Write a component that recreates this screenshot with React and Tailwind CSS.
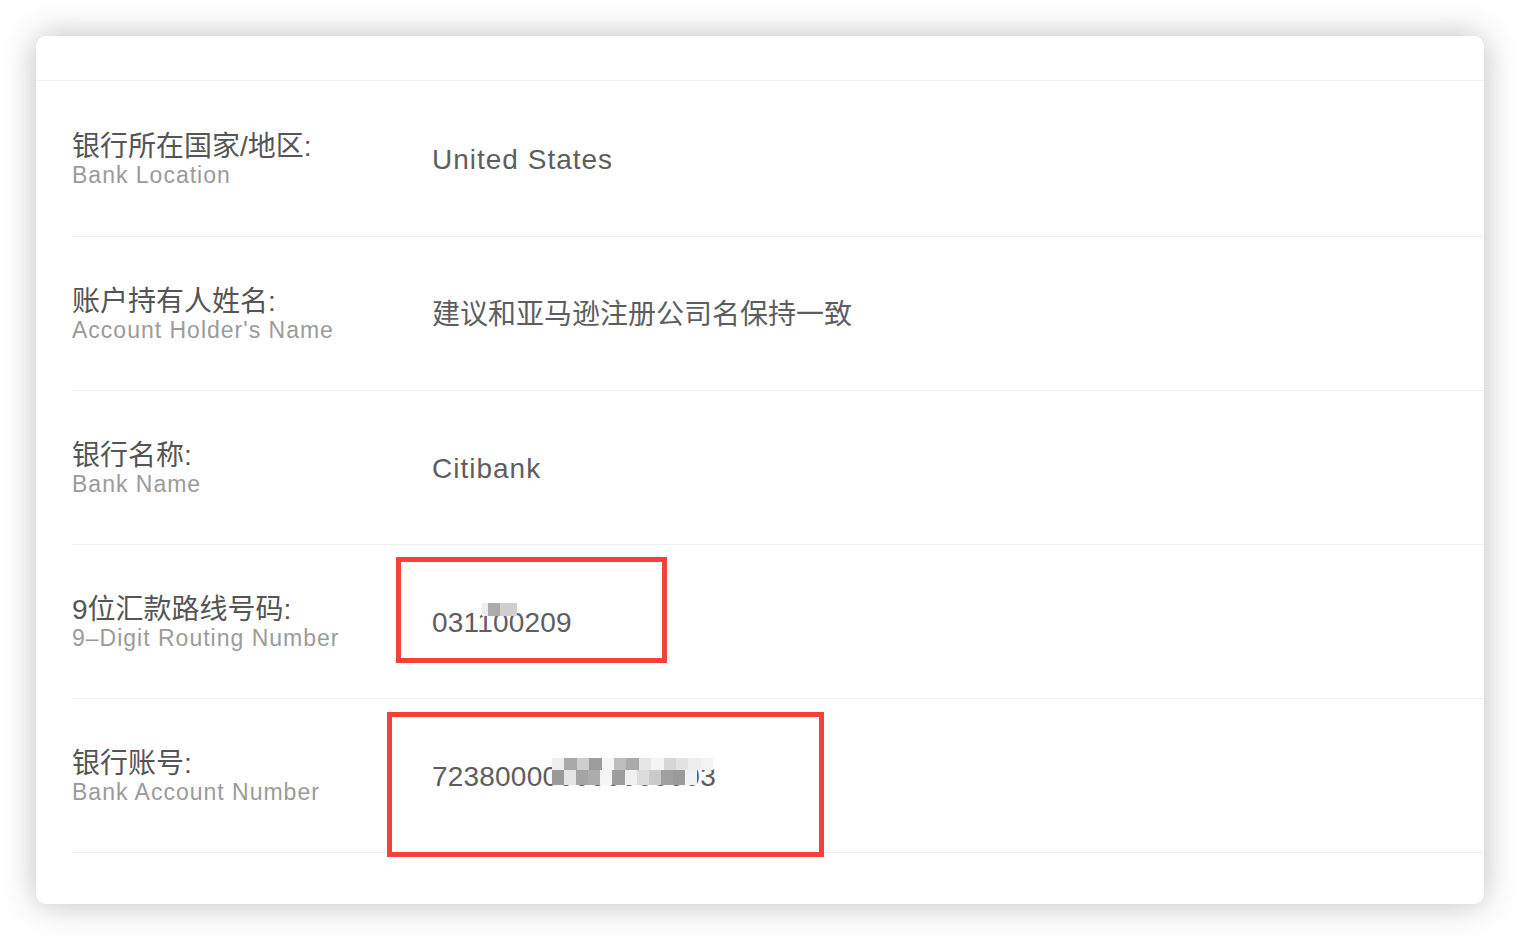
import React from 'react';

const rows = [
    { zh: '银行所在国家/地区:', en: 'Bank Location', value: 'United States', valueClass: 'tracking-[1px]', first: true },
    { zh: '账户持有人姓名:', en: "Account Holder's Name", value: '建议和亚马逊注册公司名保持一致', valueClass: '' },
    { zh: '银行名称:', en: 'Bank Name', value: 'Citibank', valueClass: 'tracking-[1px]' },
    { zh: '9位汇款路线号码:', en: '9–Digit Routing Number', value: '031100209', valueClass: 'tracking-[0.2px]' },
    { zh: '银行账号:', en: 'Bank Account Number', value: '723800000000000003', valueClass: 'tracking-[0.2px]' },
];

// watermark tiles (card-relative)
const marks = [];
[-151, 154, 459, 764].forEach((top) => {
    [49, 449, 849, 1249].forEach((left) => marks.push({ top, left }));
});

const mosaicTop = ['#efefef', '#a9a9a9', '#cdcdcd', '#9c9c9c', '#f6f6f6', '#bdbdbd', '#ababab', '#e6e6e6', '#f4f4f4', '#d6d6d6', '#e2e2e2', '#eeeeee', '#f3f3f3'];
const mosaicBottom = ['#9a9a9a', '#e4e4e4', '#a4a4a4', '#acacac', '#f5f5f5', '#9d9d9d', '#f0f0f0', '#dcdcdc', '#cbcbcb', '#a0a0a0', '#9b9b9b', '#f2f2f2'];

const App = () => {
    return (
        <div className="w-[1520px] h-[940px] bg-white p-[36px]" style={{ fontFamily: '"Liberation Sans", "Noto Sans CJK SC", sans-serif' }}>
            <div className="relative w-[1448px] h-[868px] bg-white rounded-[10px] overflow-hidden shadow-[0_0_34px_rgba(0,0,0,0.26)]">
                {/* header strip */}
                <div className="h-[45px] border-b border-[#edf1f6]"></div>

                <div className="pl-[36px]">
                    {rows.map((r) => (
                        <div key={r.en} className={`flex items-center border-b border-[#edf1f6] ${r.first ? 'h-[156px]' : 'h-[154px]'}`}>
                            <div className="w-[360px] flex flex-col pt-[2px]">
                                <div className="text-[28px] leading-[30px] text-[#555555]">{r.zh}</div>
                                <div className="text-[23px] leading-[26px] tracking-[1px] text-[#9b9b9b]">{r.en}</div>
                            </div>
                            <div className={`text-[28px] leading-[34px] text-[#5e5e5e] pt-[2px] ${r.valueClass}`}>{r.value}</div>
                        </div>
                    ))}
                </div>

                {/* watermark */}
                <div className="absolute inset-0 pointer-events-none">
                    {marks.map((m, i) => (
                        <div
                            key={i}
                            className="absolute text-[40px] leading-none text-black/[0.025] rotate-[31deg] origin-top-left whitespace-nowrap"
                            style={{ top: m.top, left: m.left }}
                        >
                            19081915658428
                        </div>
                    ))}
                </div>

                {/* mosaic over routing number */}
                <div className="absolute left-[446px] top-[567px] flex">
                    <div className="w-[6px] h-[13px] bg-[#ececec]"></div>
                    <div className="w-[12px] h-[13px] bg-[#ababab]"></div>
                    <div className="w-[17px] h-[13px] bg-[#cfcfcf]"></div>
                </div>

                {/* mosaic over account number */}
                <div className="absolute left-[516px] top-[722px] flex flex-col">
                    <div className="flex">
                        {mosaicTop.map((c, i) => (
                            <div key={i} className="w-[12.4px] h-[12px]" style={{ background: c }}></div>
                        ))}
                    </div>
                    <div className="flex">
                        {mosaicBottom.map((c, i) => (
                            <div key={i} className="w-[12.1px] h-[15px]" style={{ background: c }}></div>
                        ))}
                    </div>
                </div>

                {/* red highlight boxes */}
                <div className="absolute left-[360px] top-[521px] w-[271px] h-[106px] border-[5px] border-[#f5413b]"></div>
                <div className="absolute left-[351px] top-[676px] w-[437px] h-[145px] border-[5px] border-[#f5413b]"></div>
            </div>
        </div>
    );
};

export default App;
